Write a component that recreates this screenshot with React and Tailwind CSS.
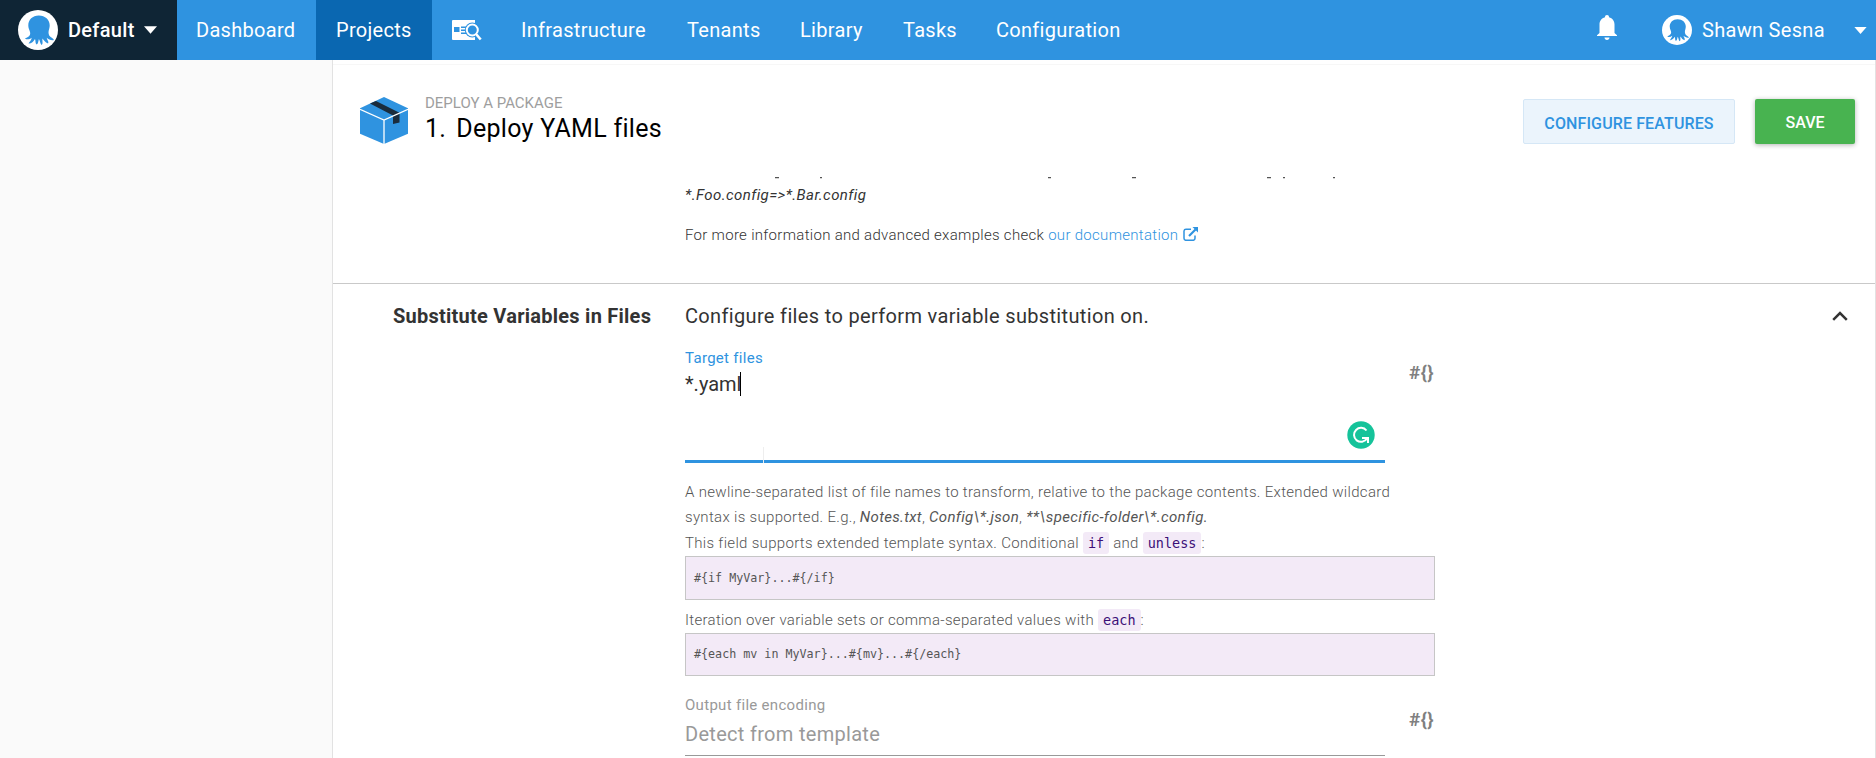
import React from "react";

const Octopus = ({ className }) => (
  <svg viewBox="0 0 40 40" className={className}>
    <circle cx="20" cy="20" r="20" fill="#fff" />
    <path
      fill="#2f93e0"
      d="M20.800 5.500C14.500 5.500 10.300 9.800 10.300 15.200c0 4 2.200 5.800 1.900 8.600C11.900 26.500 9.200 27.500 7 28.500c2 1.500 4.600.8 6.700-.8-.3 2.300-2.200 4.200-3.200 5.800 2.900.2 5-2 6.500-4.500.9 2.200 0 3.800 1.500 5.500 1.900-.7 1.700-3.400 2.400-5.500 1.300 1.900 1 4.200 2.600 6 1.900-1 .6-4 1-6.500 1.700 1.700 2.500 4.200 5.500 5 1.200-1.600-.8-3.500-1.300-5.800 2 1.500 4.600 3.200 7.300 2.300-.8-1.800-3.500-2.500-4.800-4.500-1.700-4.500.5-6 .5-10.300 0-5.400-4.500-9.700-10.900-9.700z"
    />
  </svg>
);

const Caret = ({ className }) => (
  <svg viewBox="0 0 14 8" className={className} fill="#fff">
    <path d="M0 0h14L7 8z" />
  </svg>
);

const NavItem = ({ children, className }) => (
  <a className={`flex h-full items-center whitespace-nowrap ${className}`}>{children}</a>
);

const Code = ({ children }) => (
  <code className="rounded-[3px] bg-[#f3eaf7] px-[5px] py-[3px] font-['DejaVu_Sans_Mono',monospace] text-[13.5px] tracking-normal text-[#3c1077]">
    {children}
  </code>
);

const Pre = ({ children, className }) => (
  <pre
    className={`flex w-[750px] items-center border border-[#c6c6c6] bg-[#f3eaf7] px-2 font-['DejaVu_Sans_Mono',monospace] text-[11.7px] tracking-normal text-[#555] ${className}`}
  >
    {children}
  </pre>
);

const BindToggle = () => (
  <span className="mt-[13px] mr-[1px] text-[19px] leading-[24px] font-bold tracking-[0.4px] text-[#808080]">{"#{}"}</span>
);

export default function App() {
  return (
    <div className="flex h-[758px] w-[1876px] flex-col overflow-hidden bg-white font-[Roboto,sans-serif]">
      <nav className="flex h-[60px] shrink-0 items-center bg-[#2f93e0] text-[20px] tracking-[0.3px] text-white">
        <div className="flex h-full w-[177px] items-center bg-[#0f2535] pl-[18px] font-medium">
          <Octopus className="h-10 w-10" />
          <span className="ml-[10px]">Default</span>
          <Caret className="ml-[9px] h-[8px] w-[13px]" />
        </div>
        <NavItem className="w-[139px] pl-[19px]">Dashboard</NavItem>
        <NavItem className="w-[116px] bg-[#0a67b1] pl-[20px]">Projects</NavItem>
        <NavItem className="w-[89px] pl-[20px]">
          <svg viewBox="0 0 30 21" className="h-[21px] w-[30px]">
            <path fill="#fff" d="M1 0h22v20H1a1 1 0 0 1-1-1V1a1 1 0 0 1 1-1z" />
            <path fill="#2f93e0" d="M2 7h5.500v5H2zM9 6.500h5V8H9zM9 9.500h4V11H9zM9 12.500h5V14H9z" />
            <circle cx="20.300" cy="10" r="7.500" fill="#2f93e0" />
            <circle cx="20.300" cy="10" r="5.500" fill="none" stroke="#fff" strokeWidth="2" />
            <path d="M24.500 14.500l4 5" stroke="#2f93e0" strokeWidth="4.500" />
            <path d="M24 14l4.700 5.500" stroke="#fff" strokeWidth="2.600" />
          </svg>
        </NavItem>
        <NavItem className="w-[166px]">Infrastructure</NavItem>
        <NavItem className="w-[113px]">Tenants</NavItem>
        <NavItem className="w-[103px]">Library</NavItem>
        <NavItem className="w-[93px]">Tasks</NavItem>
        <NavItem className="w-[601px]">Configuration</NavItem>
        <svg viewBox="0 0 20 25" className="mb-[6px] h-[25px] w-[20px]" fill="#fff">
          <path d="M10 0c1.300 0 2 .9 2 2.200 3.500.9 5.500 3.800 5.500 7.300V18l2.500 2.300V21H0v-.7L2.500 18V9.500C2.500 6 4.500 3.100 8 2.200 8 .9 8.700 0 10 0zM7.500 22.500h5c0 1.400-1.100 2.500-2.500 2.500s-2.500-1.100-2.500-2.500z" />
        </svg>
        <Octopus className="ml-[45px] h-[30px] w-[30px]" />
        <span className="ml-[10px] w-[152px] whitespace-nowrap">Shawn Sesna</span>
        <Caret className="h-[7px] w-[13px]" />
      </nav>

      <div className="flex min-h-0 flex-1">
        <aside className="w-[332px] shrink-0 bg-[#fafafa]" />
        <main className="flex w-[1544px] shrink-0 flex-col border-x border-[#e2e2e2]">
          <header className="flex h-[117px] shrink-0 flex-col">
            <div className="h-[5px] shrink-0 border-b border-[#f7f7f7]" />
            <div className="flex">
              <svg viewBox="0 0 48 46" preserveAspectRatio="none" className="mt-[32px] ml-[27px] h-[47px] w-[48px]">
                <path fill="#2f93e0" d="M24 0l24 11v25L24 46 0 36V11z" />
                <path fill="#1a2c3d" d="M10 6.400L16 3.800l23.500 11.500V25L33 26.500V18z" />
                <path fill="none" stroke="#fff" strokeWidth="1.300" d="M0 12L24 22.500 48 12M24 22.500v24" />
              </svg>
              <div className="mt-[28px] ml-[17px] flex w-[1098px] flex-col whitespace-nowrap">
                <span className="text-[15px] leading-[20px] text-[#9e9e9e]">DEPLOY A PACKAGE</span>
                <h1 className="text-[25px] leading-[32px] tracking-[0.3px] text-black">
                  1.<span className="ml-[10px]">Deploy YAML files</span>
                </h1>
              </div>
              <button className="mt-[34px] h-[45px] w-[212px] rounded-[2px] border border-[#d5e7f6] bg-[#ebf4fc] pt-[4px] text-[16px] font-medium tracking-[0.12px] text-[#2f93e0]">
                CONFIGURE FEATURES
              </button>
              <button className="mt-[34px] ml-5 h-[45px] w-[100px] rounded-[2px] bg-[#48b350] pt-[2px] text-[16px] font-medium text-white shadow-[0_1px_5px_rgba(0,0,0,0.3)]">
                SAVE
              </button>
            </div>
          </header>

          <section className="flex h-[107px] shrink-0 flex-col border-b border-[#c9c9c9] pl-[352px] text-[15px] font-light tracking-[0.3px] text-[#333]">
            <svg viewBox="0 0 670 2" className="h-[2px] w-[670px]" stroke="#555" strokeWidth="1.200">
              <path d="M90 .6h4M135 .6h2M363 .6h3M447 .6h4M582 .6h4M598 .6h2M648 .6h2" />
            </svg>
            <p className="mt-[4px] leading-[25px] font-normal tracking-[0.42px] italic">*.Foo.config=&gt;*.Bar.config</p>
            <p className="mt-[15px] flex leading-[25px]">
              <span>For more information and advanced examples check&nbsp;</span>
              <a className="text-[#2f93e0]">our documentation</a>
              <svg viewBox="0 0 15 14" className="mt-[4px] ml-[5px] h-[14px] w-[15px]" fill="none" stroke="#2f93e0">
                <path strokeWidth="1.500" d="M8 2.200H3A2 2 0 0 0 1 4v7.300a2 2 0 0 0 2 2h7a2 2 0 0 0 2-2V8.500" />
                <path strokeWidth="2.200" d="M6 9l6.500-6.500" />
                <path fill="#2f93e0" stroke="none" d="M9.500 0H15v5.500z" />
              </svg>
            </p>
          </section>

          <section className="flex">
            <h2 className="mt-[19px] w-[352px] shrink-0 pl-[60px] text-[20px] leading-[26px] font-bold tracking-[0.25px] text-[#333]">
              Substitute Variables in Files
            </h2>
            <div className="flex w-[750px] flex-col text-[#333]">
              <p className="mt-[19px] text-[20px] leading-[26px] tracking-[0.34px]">
                Configure files to perform variable substitution on.
              </p>
              <div className="mt-[19px] flex justify-between">
                <div className="relative flex h-[115px] w-[700px] flex-col border-b-[3px] border-[#2f93e0]">
                  <label className="text-[15px] leading-[20px] tracking-[0.3px] text-[#2f93e0]">Target files</label>
                  <div className="flex items-center pt-[4px] text-[20px] leading-[24px]">
                    *.yaml<span className="-ml-px h-[24px] w-px bg-black" />
                  </div>
                  <svg viewBox="0 0 28 28" className="absolute top-[73px] left-[662px] h-[28px] w-[28px]">
                    <circle cx="14" cy="14" r="13.700" fill="#15c39a" />
                    <path d="M19.500 9.500A7 7 0 1 0 20 17.500" fill="none" stroke="#fff" strokeWidth="2" />
                    <path d="M15 17h6v5" fill="none" stroke="#fff" strokeWidth="2" />
                  </svg>
                  <span className="absolute top-[99px] left-[78px] h-[16px] w-px bg-[#eeeeee]" />
                </div>
                <BindToggle />
              </div>
              <div className="mt-[17px] text-[15px] leading-[25px] font-light tracking-[0.31px] whitespace-nowrap text-[#555]">
                <p>A newline-separated list of file names to transform, relative to the package contents. Extended wildcard</p>
                <p>
                  syntax is supported. E.g., <em className="font-normal">Notes.txt</em>, <em className="font-normal">Config\*.json</em>,{" "}
                  <em className="font-normal tracking-[0.36px]">**\specific-folder\*.config.</em>
                </p>
                <p className="h-[26px] pt-px">
                  This field supports extended template syntax. Conditional <Code>if</Code> and <Code>unless</Code>:
                </p>
                <Pre className="h-[44px]">{"#{if MyVar}...#{/if}"}</Pre>
                <p className="mt-[7px] h-[26px] pt-px">
                  Iteration over variable sets or comma-separated values with <Code>each</Code>:
                </p>
                <Pre className="h-[43px]">{"#{each mv in MyVar}...#{mv}...#{/each}"}</Pre>
              </div>
              <div className="mt-[19px] flex justify-between">
                <div className="flex h-[61px] w-[700px] flex-col border-b border-[#999] tracking-[0.3px] text-[#999]">
                  <label className="text-[15px] leading-[20px]">Output file encoding</label>
                  <span className="mt-[6px] text-[20px] leading-[26px]">Detect from template</span>
                </div>
                <BindToggle />
              </div>
            </div>
            <svg viewBox="0 0 16 10" className="mt-[27px] ml-[397px] h-[10px] w-[16px]" fill="none" stroke="#333" strokeWidth="2.500">
              <path d="M1.200 8.800L8 2l6.800 6.800" />
            </svg>
          </section>
        </main>
      </div>
    </div>
  );
}
